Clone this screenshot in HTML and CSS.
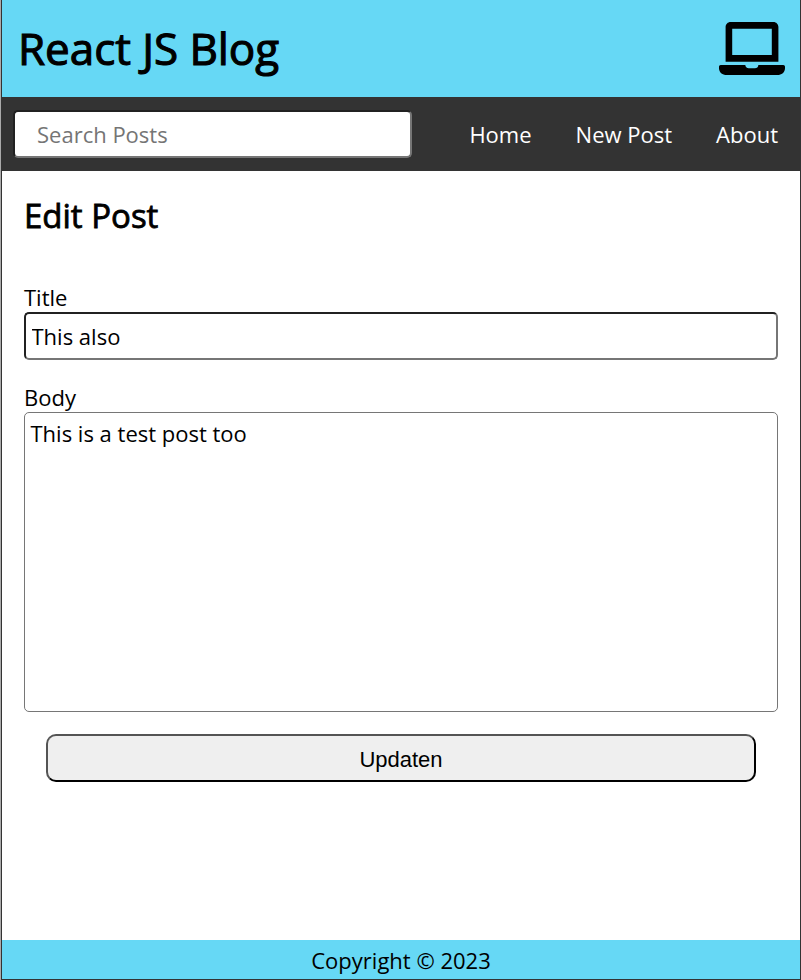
FILE: index.html
```html
<!DOCTYPE html>
<html lang="en">
<head>
<meta charset="utf-8">
<title>React JS Blog</title>
<link rel="stylesheet" href="styles.css">
</head>
<body>
<div class="app">
  <header class="header">
    <h1>React JS Blog</h1>
    <svg class="laptop" viewBox="0 0 640 512" aria-hidden="true"><path d="M624 416H381.540c-.740 19.810-14.710 32-32.740 32H288c-18.690 0-33.020-17.470-32.770-32H16c-8.800 0-16 7.200-16 16v16c0 35.200 28.800 64 64 64h512c35.200 0 64-28.800 64-64v-16c0-8.800-7.200-16-16-16zM576 48c0-26.400-21.600-48-48-48H112C85.600 0 64 21.600 64 48v336h512V48zm-64 272H128V64h384v256z"/></svg>
  </header>
  <nav class="nav">
    <input class="search" type="text" placeholder="Search Posts">
    <ul class="links"><li>Home</li><li>New Post</li><li>About</li></ul>
  </nav>
  <main class="main">
    <h2>Edit Post</h2>
    <form class="form">
      <label for="title">Title</label>
      <input class="title" id="title" type="text" value="This also">
      <label for="body">Body</label>
      <textarea class="body" id="body">This is a test post too</textarea>
      <button class="submit" type="button">Updaten</button>
    </form>
  </main>
  <footer class="footer">Copyright © 2023</footer>
</div>
</body>
</html>
```
FILE: styles.css
```css
* { box-sizing: border-box; margin: 0; padding: 0; }
body { font: 22px/30px "Open Sans", sans-serif; color: #000; background: #fff; border-left: 1px solid #aaa; }
.app { height: 980px; display: flex; flex-direction: column; border: 1px solid #333; border-top: 0; }
.header { height: 97px; background: #66d8f5; display: flex; align-items: center; justify-content: space-between; padding: 0 15px 1px 16px; }
h1 { font-size: 44px; line-height: 60px; font-weight: 400; letter-spacing: -.05px; -webkit-text-stroke: 1.1px #000; }
.laptop { width: 66px; height: 53px; }
.nav { height: 74px; background: #333; display: flex; align-items: center; justify-content: space-between; padding: 0 22px 0 11px; }
.search { width: 399px; height: 48px; padding: 0 22px; font: inherit; border: 2px inset #767676; border-radius: 5px; }
.links { display: flex; gap: 44px; list-style: none; color: #fff; }
.main { flex: 1; padding: 22px 22px 0; }
h2 { font-size: 33px; line-height: 45px; font-weight: 400; -webkit-text-stroke: .8px #000; }
.form { display: flex; flex-direction: column; margin-top: 44px; }
.title { height: 48px; padding: 0 5.500px; margin-bottom: 22px; font: inherit; border: 2px inset #767676; border-radius: 5px; }
.body { height: 300px; padding: 5px 5.500px; font: inherit; border: 1px solid #767676; border-radius: 5px; resize: none; }
.submit { height: 48px; margin: 22px 22px 0; padding-top: 3px; font: 22px "Liberation Sans", sans-serif; border: 2px outset #000; border-radius: 10px; background: #efefef; }
.footer { height: 39px; background: #66d8f5; text-align: center; line-height: 40px; }
```
